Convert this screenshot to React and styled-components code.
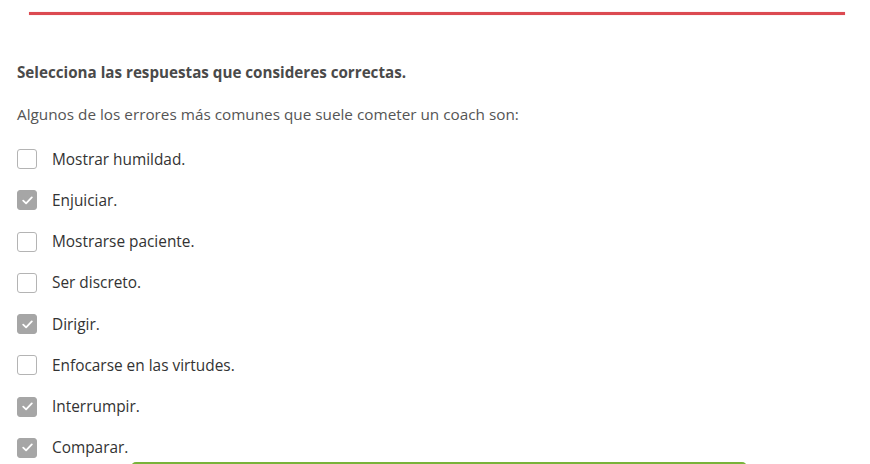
import React from "react";
import styled, { createGlobalStyle } from "styled-components";

const Global = createGlobalStyle`
  html, body { margin: 0; padding: 0; background: #fff; }
  body { font-family: "Open Sans", "Noto Sans", sans-serif; overflow: hidden; }
`;

const Page = styled.div`
  padding-top: 12px;
  width: 870px;
  height: 464px;
  overflow: hidden;
  box-sizing: border-box;
`;

const RedRule = styled.div`
  height: 3px;
  margin: 0 25px 0 29px;
  background: #dc4a51;
  box-shadow: 0 0 1px rgba(220, 74, 81, 0.5);
`;

const Content = styled.div`
  padding: 0 17px;
  display: flex;
  flex-direction: column;
`;

const Heading = styled.h2`
  margin: 47px 0 0;
  font-size: 15.2px;
  line-height: 20px;
  font-weight: 700;
  color: #4a4a4a;
`;

const Prompt = styled.p`
  margin: 22px 0 0;
  font-size: 15.3px;
  line-height: 20px;
  color: #555;
`;

const List = styled.ul`
  list-style: none;
  margin: 25px 0 0;
  padding: 0;
  display: flex;
  flex-direction: column;
  gap: 21.29px;
`;

const Item = styled.li`
  display: flex;
  align-items: center;
  height: 20px;
  gap: 15px;
  font-size: 15.4px;
  color: #333;
`;

const Box = styled.span`
  width: 20px;
  height: 20px;
  box-sizing: border-box;
  border-radius: 3px;
  border: 1.5px solid ${(p) => (p.$checked ? "#a6a6a6" : "#b4b4b4")};
  background: ${(p) => (p.$checked ? "#a6a6a6" : "#fff")};
  display: flex;
  align-items: center;
  justify-content: center;
  flex-shrink: 0;
`;

const ButtonBar = styled.div`
  margin: 4px 0 0 114px;
  width: 616px;
  height: 40px;
  flex-shrink: 0;
  border-radius: 5px 5px 0 0;
  background: #78b33a;
`;

const items = [
  ["Mostrar humildad.", false],
  ["Enjuiciar.", true],
  ["Mostrarse paciente.", false],
  ["Ser discreto.", false],
  ["Dirigir.", true],
  ["Enfocarse en las virtudes.", false],
  ["Interrumpir.", true],
  ["Comparar.", true],
];

const Check = () => (
  <svg width="11" height="9" viewBox="0 0 11 9" fill="none">
    <path d="M1.2 4.6 L4.1 7.4 L9.8 1.4" stroke="#fff" strokeWidth="1.8" strokeLinecap="round" strokeLinejoin="round" />
  </svg>
);

export default function App() {
  return (
    <Page>
      <Global />
      <RedRule />
      <Content>
        <Heading>Selecciona las respuestas que consideres correctas.</Heading>
        <Prompt>Algunos de los errores más comunes que suele cometer un coach son:</Prompt>
        <List>
          {items.map(([label, checked]) => (
            <Item key={label}>
              <Box $checked={checked}>{checked && <Check />}</Box>
              {label}
            </Item>
          ))}
        </List>
        <ButtonBar />
      </Content>
    </Page>
  );
}
